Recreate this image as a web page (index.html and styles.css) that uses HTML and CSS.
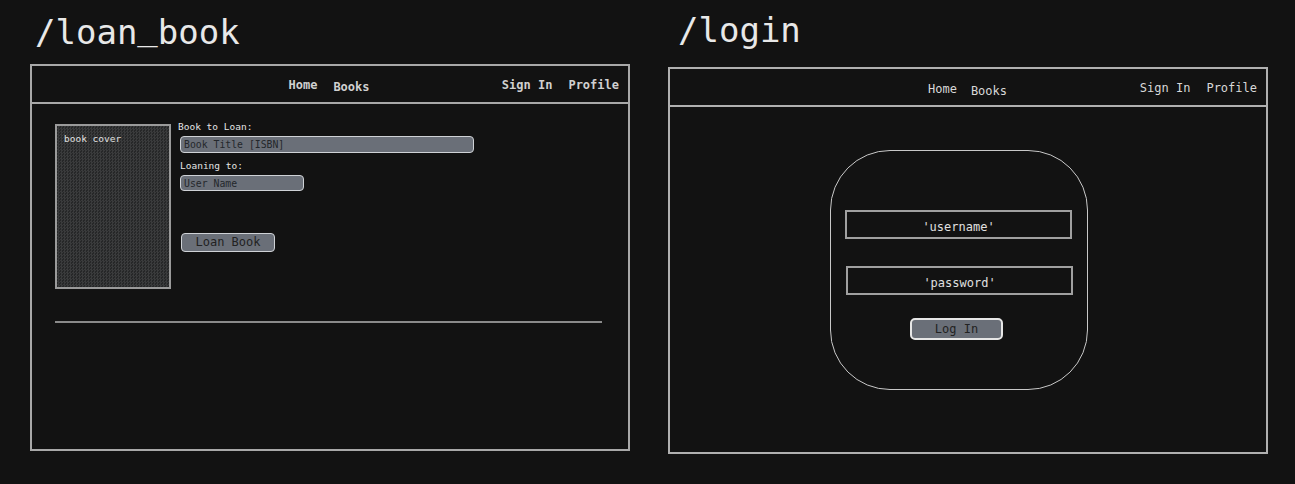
FILE: index.html
```html
<!DOCTYPE html>
<html lang="en">
<head>
<meta charset="utf-8">
<title>Wireframes</title>
<link rel="stylesheet" href="styles.css">
</head>
<body>
<main class="board">
  <section class="col col-left">
    <h1 class="route">/loan<span class="us">_</span>book</h1>
    <div class="frame">
      <header class="nav">
        <div class="nav-center"><span class="bold">Home</span><span class="bold books">Books</span></div>
        <div class="nav-right"><span class="bold">Sign In</span><span class="bold">Profile</span></div>
      </header>
      <div class="loan-body">
        <div class="loan-row">
          <div class="cover">book cover</div>
          <form class="loan-form">
            <label class="lbl">Book to Loan:</label>
            <div class="field field-wide">Book Title [ISBN]</div>
            <label class="lbl lbl-2">Loaning to:</label>
            <div class="field field-short">User Name</div>
            <button type="button" class="btn btn-loan">Loan Book</button>
          </form>
        </div>
        <hr class="sep">
      </div>
    </div>
  </section>
  <section class="col col-right">
    <h1 class="route route-right">/login</h1>
    <div class="frame frame-right">
      <header class="nav nav-right-frame">
        <div class="nav-center"><span>Home</span><span class="books">Books</span></div>
        <div class="nav-right"><span>Sign In</span><span>Profile</span></div>
      </header>
      <div class="login-body">
        <div class="card">
          <div class="box">'username'</div>
          <div class="box box-pass">'password'</div>
          <button type="button" class="btn btn-login">Log In</button>
        </div>
      </div>
    </div>
  </section>
</main>
</body>
</html>
```
FILE: styles.css
```css
* { box-sizing: border-box; }
html, body { margin: 0; padding: 0; }
body {
  background: #121212;
  color: #dcdcdc;
  font-family: "DejaVu Sans Mono", "Liberation Mono", monospace;
  width: 1295px;
  height: 484px;
  overflow: hidden;
}
.board {
  display: flex;
  gap: 38px;
  padding-left: 30px;
}
.col { width: 600px; display: flex; flex-direction: column; }
.route {
  margin: 0;
  font-size: 34px;
  font-weight: normal;
  line-height: 46px;
  height: 46px;
  margin-top: 9px;
  margin-left: 5px;
  color: #e8e8e8;
}
.us {
  display: inline-block;
  transform: translateY(-5px);
  color: #e8e8e8;
}
.route-right { margin-top: 7px; margin-left: 10px; }
.frame {
  margin-top: 9px;
  height: 387px;
  border: 2px solid #a8a8a8;
  display: flex;
  flex-direction: column;
}
.frame-right { margin-top: 14px; border-color: #b0b0b0; }
.nav {
  height: 38px;
  border-bottom: 2px solid #a8a8a8;
  display: grid;
  grid-template-columns: 1fr auto 1fr;
  align-items: center;
  font-size: 12px;
  color: #d8d8d8;
  padding: 4px 9px 0 7px;
}
.nav-center { grid-column: 2; display: flex; gap: 16px; }
.nav-right { grid-column: 3; justify-self: end; display: flex; gap: 16px; margin-top: -3px; }
.books { margin-top: 2px; }
.bold { font-weight: bold; color: #d0d0d0; }
.nav-right-frame { border-bottom-color: #b0b0b0; padding: 5px 9px 0 8px; }
.nav-right-frame .nav-center { gap: 14px; }

.loan-body { padding: 20px 26px 0 23px; }
.loan-row { display: flex; gap: 7px; }
.cover {
  width: 116px;
  height: 165px;
  border: 2px solid #9a9a9a;
  background-color: #2e2f30;
  background-image: repeating-conic-gradient(#3a3b3c 0 25%, #262728 0 50%);
  background-size: 3px 3px;
  font-size: 9.5px;
  color: #e0e0e0;
  padding: 7px 0 0 7px;
}
.loan-form { display: flex; flex-direction: column; align-items: flex-start; margin: 0; }
.lbl { font-size: 9.5px; color: #e4e4e4; line-height: 12px; margin-top: -3px; }
.lbl-2 { margin-top: 7px; margin-left: 2px; }
.field {
  margin-left: 2px;
  margin-top: 3px;
  height: 17px;
  border: 1px solid #cfd2d6;
  border-radius: 4px;
  background: #6a6f78;
  color: #24272b;
  font-size: 9.8px;
  line-height: 15px;
  padding-left: 3px;
}
.field-wide { width: 294px; }
.field-short { width: 124px; height: 16px; }
.btn {
  font-family: inherit;
  border-radius: 4px;
  background: #6a6f78;
  color: #222;
  padding: 0;
  cursor: pointer;
}
.btn-loan {
  margin-top: 42px;
  margin-left: 3px;
  width: 94px;
  height: 19px;
  border: 1px solid #cfd2d6;
  font-size: 12px;
  line-height: 17px;
}
.sep {
  margin: 32px 0 0 0;
  border: 0;
  height: 2px;
  width: 547px;
  background: #8a8a8a;
}

.login-body { padding: 43px 0 0 160px; }
.card {
  width: 258px;
  height: 240px;
  border: 1px solid #c8c8c8;
  border-radius: 60px;
  display: flex;
  flex-direction: column;
  align-items: flex-start;
  padding: 59px 0 0 14px;
}
.box {
  width: 227px;
  height: 29px;
  border: 2px solid #a0a0a0;
  text-align: center;
  font-size: 12px;
  line-height: 25px;
  padding-top: 3px;
  color: #e0e0e0;
}
.box-pass { margin-top: 27px; margin-left: 1px; }
.btn-login {
  margin-top: 23px;
  margin-left: 65px;
  width: 93px;
  height: 22px;
  border: 2px solid #e6e6e6;
  border-radius: 5px;
  font-size: 12px;
  line-height: 18px;
}
```
